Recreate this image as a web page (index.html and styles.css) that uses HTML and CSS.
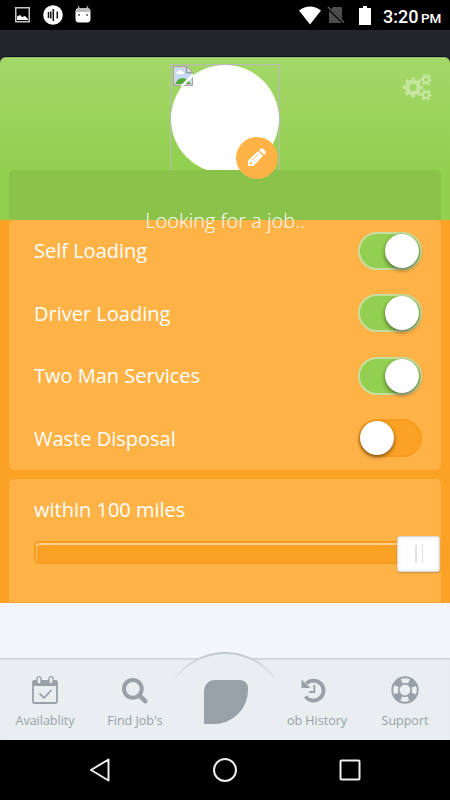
FILE: index.html
```html
<!DOCTYPE html>
<html lang="en">
<head>
    <meta charset="UTF-8">
    <meta name="viewport" content="width=device-width, initial-scale=1.0">
    <title>Availability</title>
    <link rel="stylesheet" href="styles.css">
</head>
<body>
    <div class="phone">
        <div class="statusbar">
            <div class="status-left">
                <svg width="15" height="16" viewBox="0 0 15 16"><rect x=".75" y=".75" width="13.5" height="14" fill="none" stroke="#c4c4c4" stroke-width="1.5"/><path d="M2 13V9.500l3-1.500 2 2 3-1 3 3v1z" fill="#fff"/></svg>
                <svg class="ic-audio" width="20" height="20" viewBox="0 0 20 20"><circle cx="10" cy="10" r="9.800" fill="#fff"/><path d="M5.500 7v6M7.800 6.500v7M10.300 4v12M14.300 6.500v7" stroke="#111" stroke-width="1.500"/></svg>
                <svg class="ic-robot" width="16" height="18" viewBox="0 0 16 18"><path d="M3 1l2 4M13 1l-2 4" stroke="#aaa" stroke-width="1.300"/><rect x=".5" y="3" width="15" height="14.500" rx="3.500" fill="#fff"/><path d="M1 7q0-4 4-4h6q4 0 4 4z" fill="#bbb"/><circle cx="4" cy="10" r="1" fill="#555"/><circle cx="12" cy="10" r="1" fill="#555"/></svg>
            </div>
            <div class="status-right">
                <svg width="22" height="19" viewBox="0 0 22 19"><path d="M0 4.500Q11-3.500 22 4.500L11 18.500z" fill="#fff"/></svg>
                <svg class="ic-sim" width="18" height="18" viewBox="0 0 18 18"><path d="M6 1h9v16H2V6z" fill="#4d4d4d"/><path d="M1 2l16 15" stroke="#000" stroke-width="3"/><path d="M1 1l16 15.500" stroke="#666" stroke-width="1.200"/></svg>
                <svg class="ic-battery" width="12" height="19" viewBox="0 0 12 19"><path d="M4 0h4v2h4v17H0V2h4z" fill="#fff"/></svg>
                <span class="time">3:20 <small>PM</small></span>
            </div>
        </div>
        <div class="strip"></div>

        <header class="profile">
            <div class="avatar-box">
                <div class="avatar"></div>
                <svg class="broken" width="20" height="20" viewBox="0 0 20 20">
                    <path d="M.7.700h13l5.600 5.500v13.100H.7z" fill="#fff" stroke="#a3a3a3" stroke-width="1.400"/>
                    <path d="M2 2h11v5h5v11H2z" fill="#c6d9f5"/>
                    <path d="M3 8q0-2 2-2 1-3 3.500-1.500Q10 5 10 6q1.500 0 1.500 2z" fill="#fff"/>
                    <path d="M2 18q3-6 7.500-6T18 18z" fill="#53a937"/>
                    <path d="M13.500 1v5.500h5.500" fill="#e8e8e8" stroke="#999" stroke-width="1.300"/>
                    <path d="M20.500 8.500L8.500 20.500" stroke="#fff" stroke-width="2.500"/>
                </svg>
            </div>
            <svg class="cogs" width="30" height="28" viewBox="0 0 30 28">
                <g fill="none" stroke="#c7e6a1">
                    <circle cx="10" cy="13.500" r="5.700" stroke-width="4"/>
                    <circle cx="10" cy="13.500" r="8.500" stroke-width="3" stroke-dasharray="3.400 3.276" stroke-dashoffset="1.700"/>
                    <circle cx="23" cy="5.700" r="3.100" stroke-width="2.200"/>
                    <circle cx="23" cy="5.700" r="4.800" stroke-width="2" stroke-dasharray="2.400 2.627" stroke-dashoffset="1.200"/>
                    <circle cx="23" cy="21" r="3.100" stroke-width="2.200"/>
                    <circle cx="23" cy="21" r="4.800" stroke-width="2" stroke-dasharray="2.400 2.627" stroke-dashoffset="1.200"/>
                </g>
            </svg>
            <div class="edit">
                <svg width="18" height="18" viewBox="0 0 18 18"><path d="M0 18v-5.500L10.300 3l4.700 4.700L5.500 18z" fill="#fff"/><path d="M11.200 2l1.300-1.300q1.200-1 2.400 0l2.300 2.300q1.200 1.200 0 2.400L16 6.700z" fill="#fff"/><path d="M3.800 12.200l7-6.400" stroke="#ffb347" stroke-width=".8"/><path d="M1.700 14l2 .4.300 2-1.200.2-1.100-1.200z" fill="#ffb347"/></svg>
            </div>
            <div class="status-card"></div>
            <p class="looking">Looking for a job..</p>
        </header>

        <main class="content">
            <section class="card options">
                <div class="row"><span>Self Loading</span><div class="toggle on"></div></div>
                <div class="row"><span>Driver Loading</span><div class="toggle on"></div></div>
                <div class="row"><span>Two Man Services</span><div class="toggle on"></div></div>
                <div class="row"><span>Waste Disposal</span><div class="toggle"></div></div>
            </section>
            <section class="card distance">
                <p>within 100 miles</p>
                <div class="track"><div class="handle"></div></div>
            </section>
        </main>

        <div class="spacer"></div>

        <nav class="tabs">
            <svg class="bump" width="110" height="33" viewBox="0 0 110 33">
                <defs>
                    <linearGradient id="fade" x1="0" y1="0" x2="0" y2="1">
                        <stop offset="0" stop-color="#c3c8cb"/>
                        <stop offset="1" stop-color="#c3c8cb" stop-opacity="0"/>
                    </linearGradient>
                </defs>
                <path d="M3 31A61 61 0 0 1 107 31z" fill="#e9eef1"/>
                <path d="M3 31A61 61 0 0 1 107 31" fill="none" stroke="url(#fade)" stroke-width="2"/>
            </svg>
            <div class="tab">
                <svg width="26" height="28" viewBox="0 0 26 28"><rect x="1" y="5" width="24" height="22" rx="1.500" fill="none" stroke="#98a1a7" stroke-width="1.800"/><path d="M1 4h24v6H1z" fill="#98a1a7"/><rect x="5" y=".7" width="4" height="7.300" rx="2" fill="#e9eef1" stroke="#98a1a7" stroke-width="1.300"/><rect x="17" y=".7" width="4" height="7.300" rx="2" fill="#e9eef1" stroke="#98a1a7" stroke-width="1.300"/><path d="M7.500 17.500l4.500 4.500 7.500-8" fill="none" stroke="#98a1a7" stroke-width="1.800"/></svg>
                <span>Availablity</span>
            </div>
            <div class="tab">
                <svg width="26" height="28" viewBox="0 0 26 28"><circle cx="10.800" cy="12.800" r="8.900" fill="none" stroke="#98a1a7" stroke-width="4"/><path d="M17.500 19.500l5.700 5.700" stroke="#98a1a7" stroke-width="4.600" stroke-linecap="round"/></svg>
                <span>Find Job's</span>
            </div>
            <div class="tab logo-tab"><div class="logo"></div></div>
            <div class="tab">
                <svg class="ic-history" width="26" height="28" viewBox="0 0 26 28"><path d="M5.500 7.500A10 10 0 1 1 4.500 20.500" fill="none" stroke="#98a1a7" stroke-width="3.800"/><path d="M.500 3.500v8.500h9z" fill="#98a1a7"/><path d="M13.300 9v7H8.200" fill="none" stroke="#98a1a7" stroke-width="1.900"/></svg>
                <span class="history">ob History</span>
            </div>
            <div class="tab">
                <svg width="28" height="28" viewBox="0 0 28 28"><g fill="none" stroke="#98a1a7"><circle cx="14" cy="14" r="12.700" stroke-width="1.900"/><circle cx="14" cy="14" r="6.300" stroke-width="1.800"/><circle cx="14" cy="14" r="9.500" stroke-width="6" stroke-dasharray="7.400 7.523" stroke-dashoffset="-3.760"/></g></svg>
                <span>Support</span>
            </div>
        </nav>

        <div class="sysnav">
            <svg width="22" height="26" viewBox="0 0 22 26"><path d="M19.500 2.500v21L2 13z" fill="none" stroke="#eee" stroke-width="2" stroke-linejoin="round"/></svg>
            <svg width="26" height="26" viewBox="0 0 26 26"><circle cx="13" cy="13" r="11" fill="none" stroke="#eee" stroke-width="2"/></svg>
            <svg width="22" height="22" viewBox="0 0 22 22"><rect x="1.500" y="1.500" width="19" height="19" rx="1" fill="none" stroke="#eee" stroke-width="2"/></svg>
        </div>
    </div>
</body>
</html>
```
FILE: styles.css
```css
* {
    box-sizing: border-box;
}
body {
    margin: 0;
    background: #000;
    font-family: "Open Sans", "Noto Sans", sans-serif;
}
p {
    margin: 0;
}
svg {
    display: block;
}
.phone {
    width: 450px;
    height: 800px;
    display: flex;
    flex-direction: column;
    overflow: hidden;
}

/* status bar */
.statusbar {
    height: 30px;
    padding: 0 9px 0 15px;
    background: #000;
    display: flex;
    justify-content: space-between;
    align-items: center;
}
.status-left, .status-right {
    display: flex;
    align-items: center;
}
.status-right {
    height: 29px;
}
.ic-audio {
    margin-left: 13px;
}
.ic-robot {
    margin: -3px 0 0 12px;
}
.ic-sim {
    margin-left: 6px;
}
.ic-battery {
    margin-left: 14px;
}
.time {
    margin-left: 12px;
    padding-top: 4px;
    width: 58px;
    color: #fff;
    font: 500 18px/30px Roboto, sans-serif;
    white-space: nowrap;
}
.time small {
    font-size: 13.5px;
    margin-left: -2px;
}
.strip {
    height: 27px;
    background: #22262a;
    border-bottom: 1px solid #100c25;
}

/* green header */
.profile {
    position: relative;
    height: 163px;
    padding: 7px 9px 0;
    background: linear-gradient(#a4d86a, #92cf4f 70%);
    border-radius: 6px 6px 0 0;
    box-shadow: 0 -1px 0 #100c25, 0 -6px 0 #22262a, inset 0 1px 0 #8eb860;
    z-index: 1;
}
.avatar-box {
    width: 110px;
    height: 106px;
    margin: 0 auto;
    border: 1px solid #bcb6c0;
    border-bottom: 0;
    overflow: hidden;
    position: relative;
}
.avatar {
    width: 108px;
    height: 108px;
    border-radius: 50%;
    background: #fff;
}
.broken {
    position: absolute;
    left: 2px;
    top: 1px;
}
.cogs {
    position: absolute;
    right: 17px;
    top: 17px;
}
.edit {
    position: absolute;
    left: 236px;
    top: 80px;
    width: 42px;
    height: 42px;
    border-radius: 50%;
    background: #ffb347;
    padding: 11px 0 0 12px;
}
.status-card {
    height: 50px;
    background: #8bc34a;
    border-radius: 5px 5px 0 0;
}
.looking {
    position: absolute;
    left: 0;
    right: 0;
    top: 150px;
    text-align: center;
    color: #fff;
    font-size: 20px;
    font-weight: 300;
    line-height: 28px;
}

/* orange content */
.content {
    height: 383px;
    padding: 0 9px;
    background: #fba224;
    color: #fff;
    font-size: 20px;
    display: flex;
    flex-direction: column;
    gap: 9px;
    border-bottom: 1px solid #f4a32f;
}
.card {
    background: #ffb347;
    border-radius: 5px;
}
.options {
    height: 250px;
}
.row {
    height: 62.5px;
    padding: 0 19px 1px 25px;
    display: flex;
    align-items: center;
    justify-content: space-between;
}
.toggle {
    width: 64px;
    height: 38px;
    padding: 0;
    border: 2px solid #f79c1e;
    border-radius: 19px;
    background: #fba224;
}
.toggle::before {
    content: "";
    display: block;
    width: 34px;
    height: 34px;
    border-radius: 50%;
    background: #fff;
    box-shadow: 0 2px 4px rgba(0, 0, 0, 0.5);
}
.toggle.on {
    background: #93cf50;
    border-color: #c7dea0;
}
.toggle.on::before {
    margin-left: 25px;
}
.distance {
    flex: 1;
    padding: 17px 0 0 25px;
    border-radius: 5px 5px 0 0;
}
.distance p {
    line-height: 28px;
}
.track {
    margin-top: 17px;
    height: 23px;
    width: 400px;
    border: 2px solid #f79b1b;
    border-radius: 5px;
    background: #fba224;
    box-shadow: inset 0 2px 0 #fcd294, inset 1px 0 0 #fcc377;
    display: flex;
    justify-content: flex-end;
    align-items: center;
}
.handle {
    flex: none;
    width: 43px;
    height: 36px;
    margin: 2px -8px 0 0;
    border: 1px solid #d9d9d9;
    border-radius: 3px;
    background: #fff;
    box-shadow: 0 1px 2px rgba(0, 0, 0, 0.2), inset 0 0 5px #e8e8e8;
    display: flex;
    justify-content: center;
    align-items: center;
}
.handle::before {
    content: "";
    width: 5px;
    height: 18px;
    border: solid #e2e2e2;
    border-width: 0 1px 0 2px;
}

.spacer {
    height: 55px;
    background: #f4f5fa;
}

/* tab bar */
.tabs {
    position: relative;
    height: 82px;
    background: #e9eef1;
    box-shadow: inset 0 1px 0 #cfd3d6, inset 0 2px 1px #d6dadd;
    display: flex;
}
.bump {
    position: absolute;
    left: 170px;
    top: -7px;
}
.tab {
    width: 90px;
    padding-top: 18px;
    display: flex;
    flex-direction: column;
    align-items: center;
    color: #98a1a7;
    font-size: 12.5px;
}
.tab span {
    margin-top: 8px;
    line-height: 18px;
    white-space: nowrap;
}
.tab .history {
    padding-left: 4px;
}
.ic-history {
    margin-left: -2px;
}
.logo-tab {
    position: relative;
    padding: 22px 0 0 2px;
}
.logo {
    width: 44px;
    height: 44px;
    background: #98a1a7;
    border-radius: 11px 8px 34px 1px / 11px 8px 34px 1px;
}

/* android buttons */
.sysnav {
    height: 60px;
    padding: 0 89px;
    background: #000;
    display: flex;
    justify-content: space-between;
    align-items: center;
}
```
